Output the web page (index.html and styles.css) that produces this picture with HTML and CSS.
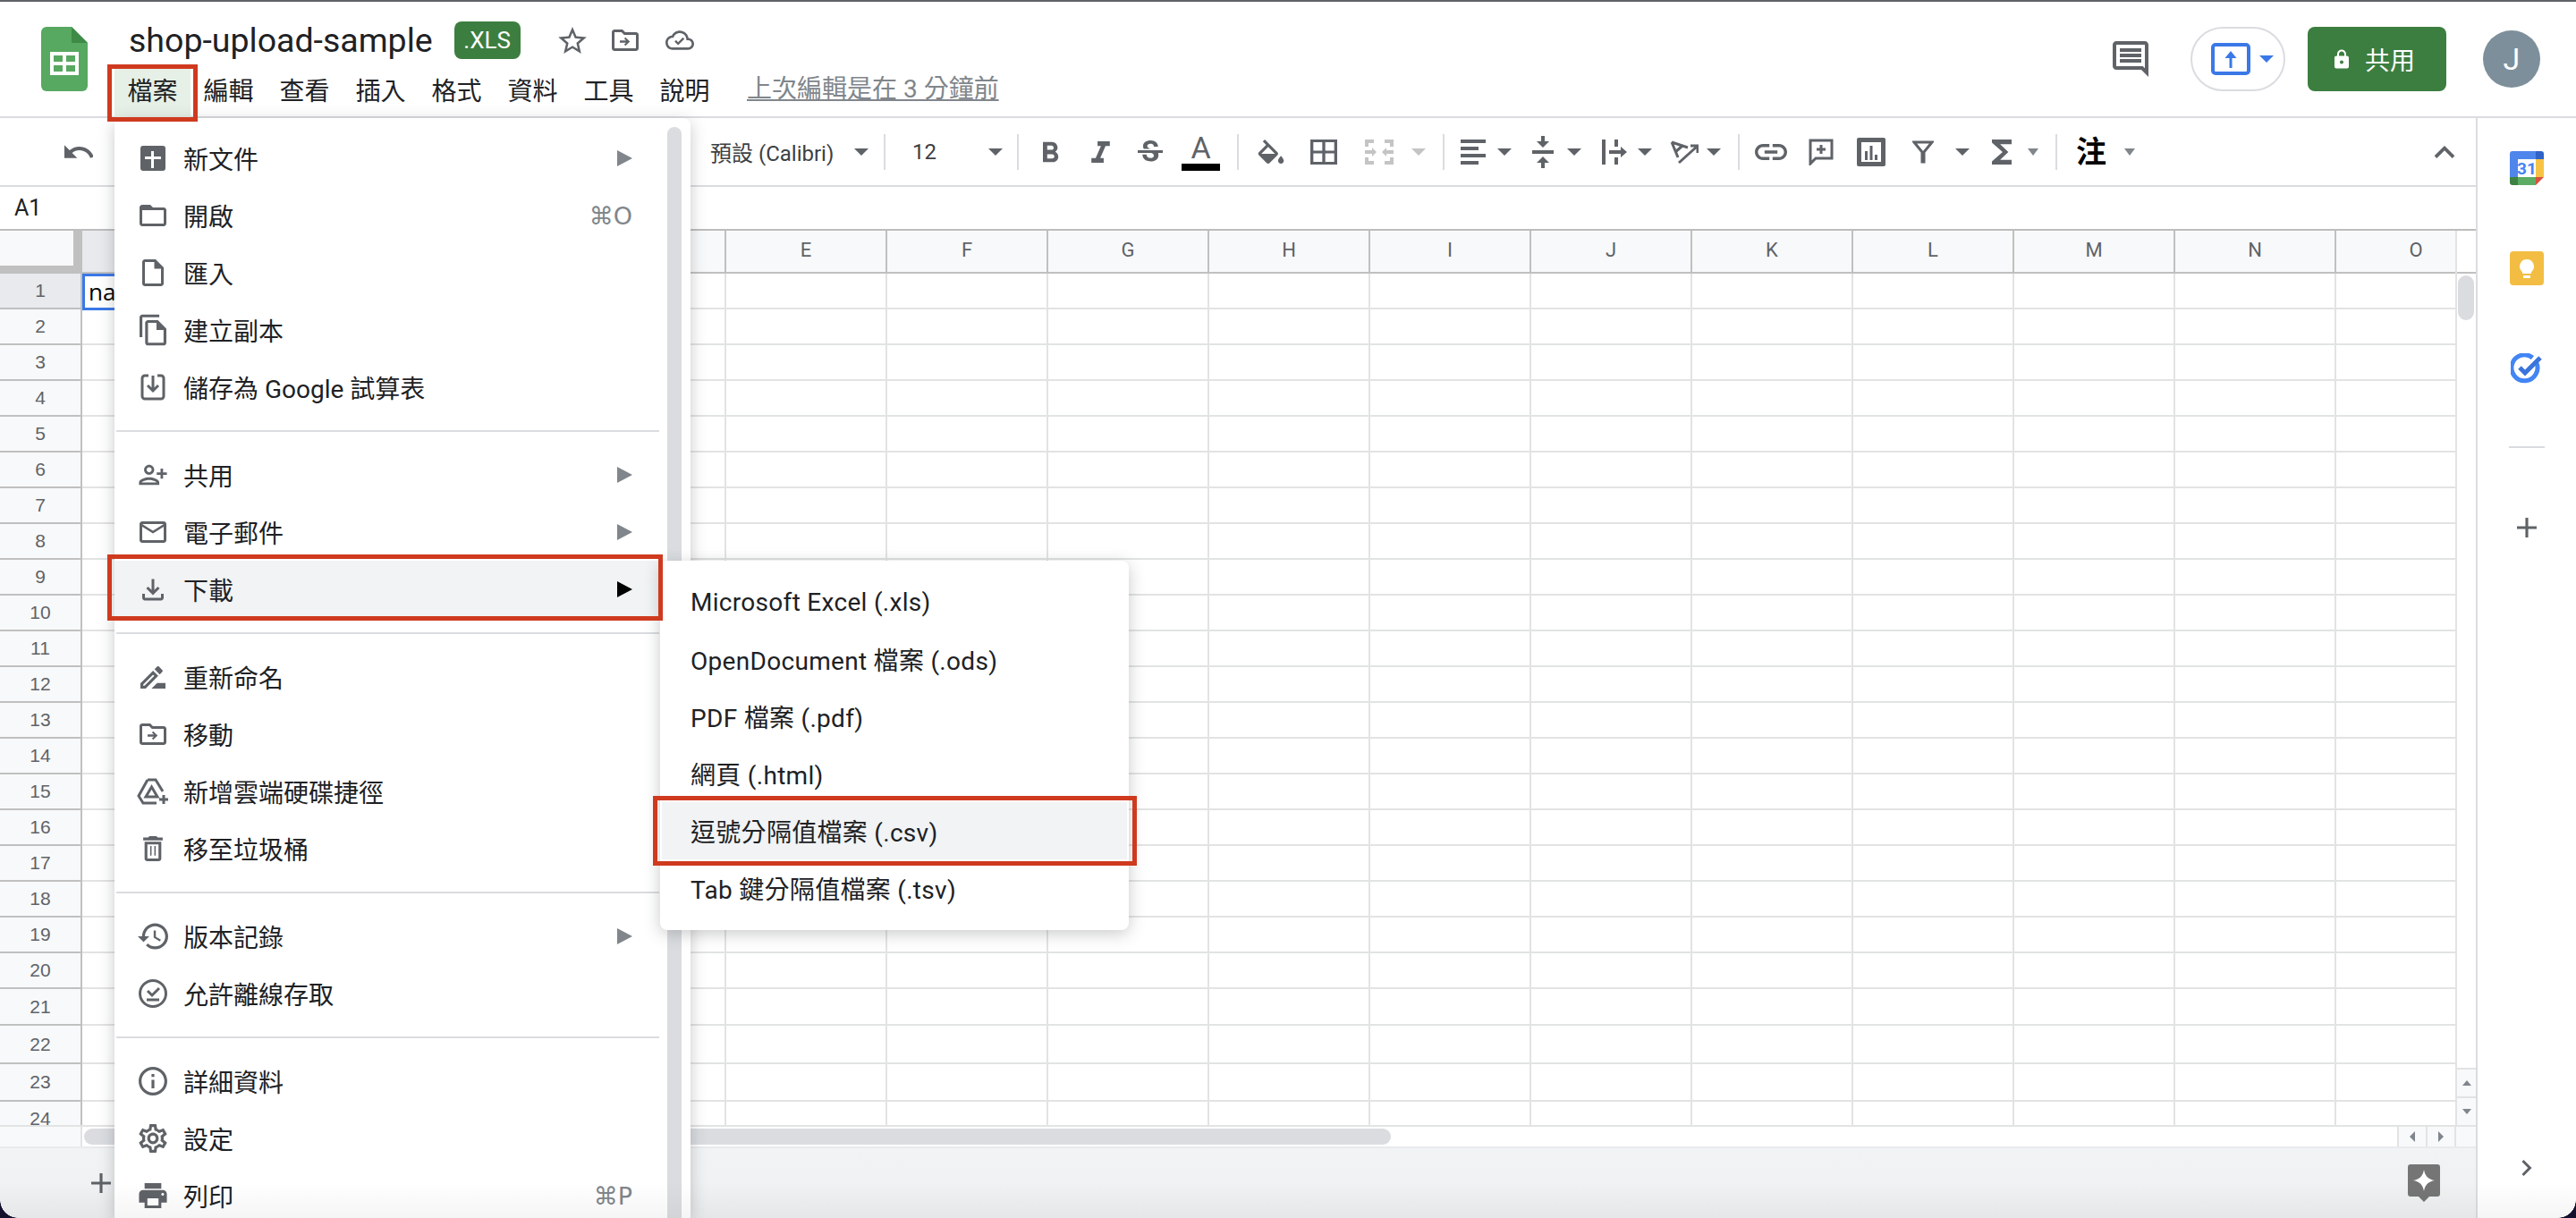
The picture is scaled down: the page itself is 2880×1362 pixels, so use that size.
FILE: index.html
```html
<!DOCTYPE html>
<html lang="zh-Hant">
<head>
    <meta charset="UTF-8">
    <title>shop-upload-sample</title>
    <link rel="stylesheet" href="styles.css">
</head>
<body>
    <div class="top-line"></div>

    <header class="doc-header">
        <svg class="logo" width="52" height="72" viewBox="0 0 52 72">
            <path fill="#57a860" d="M6 0h28l18 18v48a6 6 0 0 1-6 6H6a6 6 0 0 1-6-6V6a6 6 0 0 1 6-6z"/>
            <path fill="#3d8b46" d="M34 0l18 18H34z"/>
            <path fill="#fff" d="M10 28h32v26H10z"/>
            <path fill="#57a860" d="M14 32h10v7H14zM28 32h10v7H28zM14 43h10v7H14zM28 43h10v7H28z"/>
        </svg>
        <div class="doc-info">
            <div class="title-row">
                <span class="doc-title">shop-upload-sample</span>
                <span class="doc-badge">.XLS</span>
                <svg class="title-icon star" width="32" height="30" viewBox="2 2 20 19"><path d="M22 9.24l-7.19-.62L12 2 9.19 8.63 2 9.24l5.46 4.73L5.82 21 12 17.27 18.18 21l-1.63-7.03L22 9.24zM12 15.4l-3.76 2.27 1-4.28-3.32-2.88 4.38-.38L12 6.1l1.71 4.04 4.38.38-3.32 2.88 1 4.28L12 15.4z"/></svg>
                <svg class="title-icon move" width="30" height="24" viewBox="2 4 20 16"><path d="M20 6h-8l-2-2H4c-1.1 0-2 .9-2 2v12c0 1.1.9 2 2 2h16c1.1 0 2-.9 2-2V8c0-1.1-.9-2-2-2zm0 12H4V6h5.17l2 2H20v10z"/><path d="M12.2 9.8l-1 1 1.5 1.4H8v1.6h4.7l-1.5 1.4 1 1 3.3-3.2z"/></svg>
                <svg class="title-icon cloud" width="32" height="24" viewBox="0 4 24 16"><path d="M19.35 10.04C18.67 6.59 15.64 4 12 4 9.11 4 6.6 5.64 5.35 8.04 2.34 8.36 0 10.91 0 14c0 3.31 2.69 6 6 6h13c2.76 0 5-2.24 5-5 0-2.64-2.05-4.78-4.65-4.96zM19 18H6c-2.21 0-4-1.79-4-4s1.79-4 4-4h.71C7.37 7.69 9.48 6 12 6c3.04 0 5.5 2.46 5.5 5.5v.5H19c1.66 0 3 1.34 3 3s-1.34 3-3 3z"/><path d="M10.6 16.2l-3-3 1.3-1.3 1.7 1.7 4-4 1.3 1.3z"/></svg>
            </div>
            <nav class="menu-bar">
                <span class="menu-bar-item active">檔案</span>
                <span class="menu-bar-item">編輯</span>
                <span class="menu-bar-item">查看</span>
                <span class="menu-bar-item">插入</span>
                <span class="menu-bar-item">格式</span>
                <span class="menu-bar-item">資料</span>
                <span class="menu-bar-item">工具</span>
                <span class="menu-bar-item">說明</span>
                <span class="last-edit">上次編輯是在 3 分鐘前</span>
            </nav>
        </div>
        <div class="header-actions">
            <svg class="comments-icon" width="40" height="40" viewBox="2 2 20 20"><path d="M21.99 4c0-1.1-.89-2-1.99-2H4c-1.1 0-2 .9-2 2v12c0 1.1.9 2 2 2h14l4 4-.01-18zM20 4v13.17L18.83 16H4V4h16zM6 12h12v2H6zm0-3h12v2H6zm0-3h12v2H6z"/></svg>
            <div class="present-btn">
                <svg width="44" height="36" viewBox="0 0 44 36"><rect x="2" y="2" width="40" height="32" rx="3" fill="none" stroke="#3b78e7" stroke-width="4"/><path fill="#3b78e7" d="M20.500 28V17h-5l6.500-8 6.500 8h-5v11z"/></svg>
                <span class="caret blue"></span>
            </div>
            <div class="share-btn">
                <svg width="16" height="22" viewBox="4 1 16 21"><path fill="#fff" d="M18 8h-1V6c0-2.760-2.240-5-5-5S7 3.240 7 6v2H6c-1.100 0-2 .9-2 2v10c0 1.100.9 2 2 2h12c1.100 0 2-.9 2-2V10c0-1.100-.9-2-2-2zm-6 9c-1.100 0-2-.9-2-2s.9-2 2-2 2 .9 2 2-.9 2-2 2zM9 8V6c0-1.660 1.340-3 3-3s3 1.340 3 3v2H9z"/></svg>
                <span>共用</span>
            </div>
            <div class="avatar">J</div>
        </div>
    </header>

    <div class="main-row">
        <div class="workspace">
            <div class="toolbar">
                <svg class="tool" width="32" height="15" viewBox="2 7 20 9"><path d="M12.500 8c-2.650 0-5.050.99-6.900 2.600L2 7v9h9l-3.620-3.620c1.390-1.160 3.160-1.880 5.120-1.880 3.540 0 6.550 2.310 7.600 5.500l2.370-.78C21.080 11.030 17.150 8 12.500 8z"/></svg>
                <span></span>
                <span class="tool-text">預設 (Calibri)</span>
                <span class="caret"></span>
                <span class="tool-sep"></span>
                <span class="tool-text">12</span>
                <span class="caret"></span>
                <span class="tool-sep"></span>
                <svg class="tool" width="20" height="24" viewBox="6 3.500 12 15"><path d="M15.600 10.790c.97-.67 1.650-1.770 1.650-2.790 0-2.260-1.750-4-4-4H7v14h7.040c2.090 0 3.710-1.700 3.710-3.790 0-1.520-.86-2.820-2.150-3.420zM10 6.500h3c.83 0 1.500.67 1.500 1.500s-.67 1.500-1.500 1.500h-3v-3zm3.500 9H10v-3h3.500c.83 0 1.500.67 1.500 1.500s-.67 1.500-1.500 1.500z"/></svg>
                <svg class="tool" width="25" height="24" viewBox="6 4 12 14"><path d="M10 4v3h2.210l-3.420 8H6v3h8v-3h-2.210l3.420-8H18V4z"/></svg>
                <svg class="tool" width="28" height="25" viewBox="3 3 18 16"><path d="M6.850 7.080C6.850 4.370 9.450 3 12.240 3c1.640 0 3 .49 3.900 1.280.77.65 1.460 1.730 1.460 3.240h-3.010c0-.31-.05-.59-.15-.85-.29-.86-1.200-1.280-2.250-1.280-1.860 0-2.340 1.020-2.340 1.700 0 .48.25.88.74 1.210.38.25.77.48 1.410.7H7.390c-.21-.34-.54-.89-.54-1.920zM21 12v-2H3v2h9.620c1.150.45 1.960.75 1.960 1.970 0 1-.81 1.670-2.280 1.670-1.540 0-2.930-.54-2.930-2.510H6.400c0 .55.08 1.130.24 1.580.81 2.290 3.220 3.300 5.670 3.300 2.350 0 5.590-.92 5.590-4.310 0-.5-.03-1.190-.2-1.700H21z"/></svg>
                <span class="text-color">A</span>
                <span class="tool-sep"></span>
                <svg class="tool" width="30" height="27" viewBox="3 0 18 17"><path d="M16.560 8.940L7.620 0 6.210 1.410l2.380 2.380-5.150 5.150c-.59.59-.59 1.540 0 2.120l5.500 5.500c.29.29.68.44 1.060.44s.77-.15 1.060-.44l5.500-5.500c.59-.58.59-1.530 0-2.120zM5.210 10L10 5.210 14.790 10H5.210zM19 11.500s-2 2.170-2 3.500c0 1.100.9 2 2 2s2-.9 2-2c0-1.330-2-3.500-2-3.500z"/></svg>
                <svg class="tool" width="30" height="28" viewBox="3 3 18 18" preserveAspectRatio="none"><path d="M3 3v18h18V3H3zm8 16H5v-6h6v6zm0-8H5V5h6v6zm8 8h-6v-6h6v6zm0-8h-6V5h6v6z"/></svg>
                <svg class="tool disabled" width="32" height="28" viewBox="0 0 32 28"><path d="M0 0h10v4H4v4H0zM22 0h10v8h-4V4h-6zM0 20h4v4h6v4H0zM28 20h4v8H22v-4h6zM0 12h8V9l5 5-5 5v-3H0zM32 12h-8V9l-5 5 5 5v-3h8z"/></svg>
                <span class="caret disabled"></span>
                <span class="tool-sep"></span>
                <svg class="tool" width="28" height="28" viewBox="0 0 28 28"><path d="M0 0h28v4H0zM0 8h20v4H0zM0 16h28v4H0zM0 24h20v4H0z"/></svg>
                <span class="caret"></span>
                <svg class="tool" width="24" height="36" viewBox="0 0 24 36"><path d="M0 16h24v4H0zM10 0h4v6h5l-7 7-7-7h5zM10 36v-6H5l7-7 7 7h-5v6z"/></svg>
                <span class="caret"></span>
                <svg class="tool" width="28" height="28" viewBox="0 0 28 28"><path d="M0 0h4v28H0zM14 0h4v8h-4zM14 20h4v8h-4zM8 12h13V8l7 6-7 6v-4H8z"/></svg>
                <span class="caret"></span>
                <svg class="tool line" width="32" height="28" viewBox="0 0 32 28"><path d="M2 3l7 17M2 3l18 6M6 14l8-7M10 26L30 8M23 7h8v8"/></svg>
                <span class="caret"></span>
                <span class="tool-sep"></span>
                <svg class="tool" width="36" height="18" viewBox="2 7 20 10"><path d="M3.900 12c0-1.710 1.390-3.100 3.100-3.100h4V7H7c-2.760 0-5 2.240-5 5s2.240 5 5 5h4v-1.900H7c-1.710 0-3.100-1.390-3.100-3.100zM8 13h8v-2H8v2zm9-6h-4v1.900h4c1.710 0 3.100 1.390 3.100 3.100s-1.390 3.100-3.100 3.100h-4V17h4c2.760 0 5-2.240 5-5s-2.240-5-5-5z"/></svg>
                <svg class="tool line" width="28" height="30" viewBox="0 0 28 30"><path d="M2 2h24v20H8l-6 6zM14 7v10M9 12h10"/></svg>
                <svg class="tool" width="32" height="32" viewBox="0 0 32 32"><path fill-rule="evenodd" d="M0 2a2 2 0 0 1 2-2h28a2 2 0 0 1 2 2v28a2 2 0 0 1-2 2H2a2 2 0 0 1-2-2zM5 5v22h22V5z"/><path d="M9 15h3v10H9zM14.500 9h3v16h-3zM20 19h3v6h-3z"/></svg>
                <svg class="tool line" width="24" height="26" viewBox="0 0 24 26"><path d="M2 2h20L13 13v11h-2V13z"/></svg>
                <span class="caret"></span>
                <svg class="tool" width="22" height="28" viewBox="6 4 12 16" preserveAspectRatio="none"><path d="M18 4H6v2l6.500 6L6 18v2h12v-3h-7l5-5-5-5h7z"/></svg>
                <span class="caret small"></span>
                <span class="tool-sep"></span>
                <span class="tool-note">注</span>
                <span class="caret small"></span>
                <svg class="tool" width="24" height="14" viewBox="6 8 12 7.410"><path d="M12 8l-6 6 1.410 1.410L12 10.830l4.590 4.580L18 14z"/></svg>
            </div>

            <div class="formula-bar">A1</div>

            <div class="sheet">
                <div class="sheet-grid">
                    <div class="col-headers">
                        <div class="corner"></div>
                        <div class="col-head selected">A</div>
                        <div class="col-head">B</div>
                        <div class="col-head">C</div>
                        <div class="col-head">D</div>
                        <div class="col-head">E</div>
                        <div class="col-head">F</div>
                        <div class="col-head">G</div>
                        <div class="col-head">H</div>
                        <div class="col-head">I</div>
                        <div class="col-head">J</div>
                        <div class="col-head">K</div>
                        <div class="col-head">L</div>
                        <div class="col-head">M</div>
                        <div class="col-head">N</div>
                        <div class="col-head">O</div>
                    </div>
                    <div class="row"><div class="row-head selected">1</div><div class="cells"><div class="active-cell">name</div></div></div>
                    <div class="row"><div class="row-head">2</div><div class="cells"></div></div>
                    <div class="row"><div class="row-head">3</div><div class="cells"></div></div>
                    <div class="row"><div class="row-head">4</div><div class="cells"></div></div>
                    <div class="row"><div class="row-head">5</div><div class="cells"></div></div>
                    <div class="row"><div class="row-head">6</div><div class="cells"></div></div>
                    <div class="row"><div class="row-head">7</div><div class="cells"></div></div>
                    <div class="row"><div class="row-head">8</div><div class="cells"></div></div>
                    <div class="row"><div class="row-head">9</div><div class="cells"></div></div>
                    <div class="row"><div class="row-head">10</div><div class="cells"></div></div>
                    <div class="row"><div class="row-head">11</div><div class="cells"></div></div>
                    <div class="row"><div class="row-head">12</div><div class="cells"></div></div>
                    <div class="row"><div class="row-head">13</div><div class="cells"></div></div>
                    <div class="row"><div class="row-head">14</div><div class="cells"></div></div>
                    <div class="row"><div class="row-head">15</div><div class="cells"></div></div>
                    <div class="row"><div class="row-head">16</div><div class="cells"></div></div>
                    <div class="row"><div class="row-head">17</div><div class="cells"></div></div>
                    <div class="row"><div class="row-head">18</div><div class="cells"></div></div>
                    <div class="row"><div class="row-head">19</div><div class="cells"></div></div>
                    <div class="row"><div class="row-head">20</div><div class="cells"></div></div>
                    <div class="row"><div class="row-head">21</div><div class="cells"></div></div>
                    <div class="row tall-22"><div class="row-head">22</div><div class="cells"></div></div>
                    <div class="row tall-23"><div class="row-head">23</div><div class="cells"></div></div>
                    <div class="row"><div class="row-head">24</div><div class="cells"></div></div>
                </div>
                <div class="vscroll">
                    <div class="vscroll-head"></div>
                    <div class="vscroll-thumb"></div>
                    <div class="vscroll-track"></div>
                    <div class="scroll-btn"><span class="arrow up"></span></div>
                    <div class="scroll-btn"><span class="arrow down"></span></div>
                </div>
            </div>

            <div class="hscroll">
                <div class="hscroll-head"></div>
                <div class="hscroll-track"><div class="hscroll-thumb"></div></div>
                <div class="hscroll-btn"><span class="arrow left"></span></div>
                <div class="hscroll-btn"><span class="arrow right"></span></div>
                <div class="hscroll-end"></div>
            </div>

            <div class="sheet-bar">
                <svg class="tool" width="22" height="22" viewBox="5 5 14 14"><path d="M19 13h-6v6h-2v-6H5v-2h6V5h2v6h6v2z"/></svg>
                <svg width="36" height="42" viewBox="0 0 36 42"><path fill="#757575" d="M3 0h30a3 3 0 0 1 3 3v30a3 3 0 0 1-3 3H24l-6 6-6-6H3a3 3 0 0 1-3-3V3a3 3 0 0 1 3-3z"/><path fill="#fff" d="M18 6c1.200 7 4.800 10.800 12 12-7.200 1.200-10.800 5-12 12-1.200-7-4.800-10.800-12-12 7.200-1.200 10.800-5 12-12z"/></svg>
            </div>
        </div>

        <aside class="side-panel">
            <svg class="side-calendar" width="38" height="38" viewBox="0 0 38 38">
                <path fill="#4f86ec" d="M3 0h26v9H9v20H0V3a3 3 0 0 1 3-3z"/>
                <path fill="#2f63c8" d="M29 0h6a3 3 0 0 1 3 3v6h-9z"/>
                <path fill="#f6c344" d="M29 9h9v20h-9z"/>
                <path fill="#5cac64" d="M9 29h20v9H9z"/>
                <path fill="#3d8243" d="M0 29h9v9H3a3 3 0 0 1-3-3z"/>
                <path fill="#d9503f" d="M29 29h9l-9 9z"/>
                <text x="19" y="26" text-anchor="middle" class="cal-num">31</text>
            </svg>
            <svg class="side-keep" width="38" height="38" viewBox="0 0 38 38">
                <rect width="38" height="38" rx="4" fill="#f2bd42"/>
                <path fill="#fff" d="M19 9a8 8 0 0 0-5 14.200V25h10v-1.800A8 8 0 0 0 19 9zM15 27h8v3h-8z"/>
            </svg>
            <svg class="side-tasks" width="36" height="34" viewBox="0 0 36 34">
                <path fill="none" stroke="#4285f4" stroke-width="5" d="M28.500 10a14.500 14.500 0 1 1-4-5"/>
                <path fill="none" stroke="#3a74dc" stroke-width="5" d="M10 16l6 6L33 5"/>
            </svg>
            <div class="side-line"></div>
            <svg class="tool side-plus" width="22" height="22" viewBox="5 5 14 14"><path d="M19 13h-6v6h-2v-6H5v-2h6V5h2v6h6v2z"/></svg>
            <svg class="tool side-chevron" width="12" height="18" viewBox="8.590 6 7.410 12"><path d="M10 6L8.590 7.410 13.170 12l-4.580 4.590L10 18l6-6z"/></svg>
        </aside>
    </div>

    <div class="file-menu">
        <div class="file-list">
            <div class="menu-item"><span class="menu-icon"><svg width="28" height="28" viewBox="0 0 28 28"><path d="M3 0h22a3 3 0 0 1 3 3v22a3 3 0 0 1-3 3H3a3 3 0 0 1-3-3V3a3 3 0 0 1 3-3zm9 6v6H5v3h7v10h3V15h8v-3h-8V6z"/></svg></span><span>新文件</span><span class="menu-arrow"></span></div>
            <div class="menu-item"><span class="menu-icon"><svg width="32" height="24" viewBox="2 4 20 16"><path d="M20 6h-8l-2-2H4c-1.100 0-1.990.9-1.990 2L2 18c0 1.100.9 2 2 2h16c1.100 0 2-.9 2-2V8c0-1.100-.9-2-2-2zm0 12H4V8h16v10z"/></svg></span><span>開啟</span><span class="shortcut">⌘O</span></div>
            <div class="menu-item"><span class="menu-icon"><svg width="24" height="32" viewBox="4 2 16 20"><path d="M14 2H6c-1.100 0-1.990.9-1.990 2L4 20c0 1.100.89 2 1.990 2H18c1.100 0 2-.9 2-2V8l-6-6zM6 20V4h7v5h5v11H6z"/></svg></span><span>匯入</span></div>
            <div class="menu-item"><span class="menu-icon"><svg width="30" height="36" viewBox="2 1 19 22"><path d="M16 1H4c-1.100 0-2 .9-2 2v14h2V3h12V1zm-1 4H8c-1.100 0-2 .9-2 2v14c0 1.100.9 2 2 2h11c1.100 0 2-.9 2-2V11l-6-6zM8 21V7h6v5h5v9H8z"/></svg></span><span>建立副本</span></div>
            <div class="menu-item"><span class="menu-icon"><svg class="line" width="28" height="30" viewBox="0 0 28 30"><path d="M9 2H5a3 3 0 0 0-3 3v20a3 3 0 0 0 3 3h18a3 3 0 0 0 3-3V5a3 3 0 0 0-3-3h-4M14 2v16M8 13l6 6 6-6"/></svg></span><span>儲存為 Google 試算表</span></div>
            <div class="menu-sep"></div>
            <div class="menu-item"><span class="menu-icon"><svg width="34" height="24" viewBox="0 4 24 16"><g transform="translate(24 0) scale(-1 1)"><path d="M15 12c2.210 0 4-1.790 4-4s-1.790-4-4-4-4 1.790-4 4 1.790 4 4 4zm0-6c1.100 0 2 .9 2 2s-.9 2-2 2-2-.9-2-2 .9-2 2-2zm0 8c-2.670 0-8 1.340-8 4v2h16v-2c0-2.660-5.330-4-8-4zm-6 4c.22-.72 3.310-2 6-2 2.700 0 5.800 1.290 6 2H9zM6 15v-3h3v-2H6V7H4v3H1v2h3v3z"/></g></svg></span><span>共用</span><span class="menu-arrow"></span></div>
            <div class="menu-item"><span class="menu-icon"><svg width="32" height="24" viewBox="2 4 20 16"><path d="M22 6c0-1.100-.9-2-2-2H4c-1.100 0-2 .9-2 2v12c0 1.100.9 2 2 2h16c1.100 0 2-.9 2-2V6zm-2 0l-8 5-8-5h16zm0 12H4V8l8 5 8-5v10z"/></svg></span><span>電子郵件</span><span class="menu-arrow"></span></div>
            <div class="menu-item hover"><span class="menu-icon"><svg width="24" height="25" viewBox="4 4 16 16"><path d="M18 15v3H6v-3H4v3c0 1.100.9 2 2 2h12c1.100 0 2-.9 2-2v-3h-2zm-1-4l-1.410-1.410L13 12.170V4h-2v8.170L8.410 9.590 7 11l5 5 5-5z"/></svg></span><span>下載</span><span class="menu-arrow"></span></div>
            <div class="menu-sep"></div>
            <div class="menu-item"><span class="menu-icon"><svg width="28" height="25" viewBox="3 4 18 16"><path d="M15 16l-4 4h10v-4h-6zM12.060 7.190L3 16.250V20h3.750l9.060-9.060-3.750-3.750zM5.920 18H5v-.92l7.060-7.060.92.92L5.920 18zM18.710 8.040c.39-.39.39-1.020 0-1.410l-2.340-2.340c-.39-.39-1.020-.39-1.410 0l-1.830 1.830 3.750 3.750 1.830-1.830z"/></svg></span><span>重新命名</span></div>
            <div class="menu-item"><span class="menu-icon"><svg width="30" height="24" viewBox="2 4 20 16"><path d="M20 6h-8l-2-2H4c-1.100 0-2 .9-2 2v12c0 1.100.9 2 2 2h16c1.100 0 2-.9 2-2V8c0-1.100-.9-2-2-2zm0 12H4V6h5.170l2 2H20v10z"/><path d="M12.200 9.800l-1 1 1.500 1.400H8v1.600h4.700l-1.500 1.400 1 1 3.300-3.200z"/></svg></span><span>移動</span></div>
            <div class="menu-item"><span class="menu-icon"><svg class="line" width="36" height="30" viewBox="0 0 36 30"><path d="M12 2h9l8 13M12 2L2 20l5 8h15M10 21h13l-6.500-11zM30 19v10M25 24h10"/></svg></span><span>新增雲端硬碟捷徑</span></div>
            <div class="menu-item"><span class="menu-icon"><svg width="24" height="28" viewBox="5 3 14 18"><path d="M16 9v10H8V9h8m-1.500-6h-5l-1 1H5v2h14V4h-3.500l-1-1zM18 7H6v12c0 1.100.9 2 2 2h8c1.100 0 2-.9 2-2V7z"/><path d="M10 10h1v7h-1zM13 10h1v7h-1z"/></svg></span><span>移至垃圾桶</span></div>
            <div class="menu-sep"></div>
            <div class="menu-item"><span class="menu-icon"><svg width="34" height="30" viewBox="1 3 21 18"><path d="M13 3c-4.970 0-9 4.030-9 9H1l3.890 3.890.07.14L9 12H6c0-3.870 3.130-7 7-7s7 3.130 7 7-3.130 7-7 7c-1.930 0-3.680-.79-4.940-2.060l-1.420 1.420C8.270 19.990 10.510 21 13 21c4.970 0 9-4.030 9-9s-4.030-9-9-9zm-1 5v5l4.280 2.540.72-1.210-3.500-2.080V8H12z"/></svg></span><span>版本記錄</span><span class="menu-arrow"></span></div>
            <div class="menu-item"><span class="menu-icon"><svg class="line" width="32" height="32" viewBox="0 0 32 32"><circle cx="16" cy="16" r="14.500"/><path d="M10 13l5 5 8-8M9 23h14"/></svg></span><span>允許離線存取</span></div>
            <div class="menu-sep"></div>
            <div class="menu-item"><span class="menu-icon"><svg width="32" height="32" viewBox="2 2 20 20"><path d="M11 7h2v2h-2zm0 4h2v6h-2zm1-9C6.480 2 2 6.480 2 12s4.480 10 10 10 10-4.480 10-10S17.520 2 12 2zm0 18c-4.410 0-8-3.590-8-8s3.590-8 8-8 8 3.590 8 8-3.590 8-8 8z"/></svg></span><span>詳細資料</span></div>
            <div class="menu-item"><span class="menu-icon"><svg width="32" height="32" viewBox="2 2 20 20"><path d="M19.430 12.980c.04-.32.07-.64.07-.98 0-.34-.03-.66-.07-.98l2.110-1.650c.19-.15.24-.42.12-.64l-2-3.460c-.09-.16-.26-.25-.44-.25-.06 0-.12.01-.17.03l-2.490 1c-.52-.4-1.080-.73-1.690-.98l-.38-2.650C14.460 2.180 14.250 2 14 2h-4c-.25 0-.46.18-.49.42l-.38 2.650c-.61.25-1.170.59-1.690.98l-2.490-1c-.06-.02-.12-.03-.18-.03-.17 0-.34.09-.43.25l-2 3.460c-.13.22-.07.49.12.64l2.110 1.650c-.04.32-.07.65-.07.98 0 .33.03.66.07.98l-2.110 1.650c-.19.15-.24.42-.12.64l2 3.460c.09.16.26.25.44.25.06 0 .12-.01.17-.03l2.490-1c.52.4 1.080.73 1.690.98l.38 2.650c.03.24.24.42.49.42h4c.25 0 .46-.18.49-.42l.38-2.650c.61-.25 1.170-.59 1.690-.98l2.490 1c.06.02.12.03.18.03.17 0 .34-.09.43-.25l2-3.460c.12-.22.07-.49-.12-.64l-2.110-1.650zm-1.980-1.710c.04.31.05.52.05.73 0 .21-.02.43-.05.73l-.14 1.130.89.7 1.080.84-.7 1.210-1.270-.51-1.040-.42-.9.68c-.43.32-.84.56-1.250.73l-1.060.43-.16 1.130-.2 1.350h-1.400l-.19-1.350-.16-1.130-1.060-.43c-.43-.18-.83-.41-1.230-.71l-.91-.7-1.060.43-1.270.51-.7-1.210 1.080-.84.89-.7-.14-1.130c-.03-.31-.05-.54-.05-.74s.02-.43.05-.73l.14-1.130-.89-.7-1.080-.84.7-1.210 1.270.51 1.040.42.9-.68c.43-.32.84-.56 1.250-.73l1.060-.43.16-1.130.2-1.350h1.390l.19 1.350.16 1.130 1.060.43c.43.18.83.41 1.230.71l.91.7 1.060-.43 1.270-.51.7 1.210-1.070.85-.89.7.14 1.130zM12 8c-2.210 0-4 1.790-4 4s1.790 4 4 4 4-1.790 4-4-1.790-4-4-4zm0 6c-1.100 0-2-.9-2-2s.9-2 2-2 2 .9 2 2-.9 2-2 2z"/></svg></span><span>設定</span></div>
            <div class="menu-item"><span class="menu-icon"><svg width="32" height="28" viewBox="2 3 20 18"><path d="M19 8H5c-1.660 0-3 1.340-3 3v6h4v4h12v-4h4v-6c0-1.660-1.340-3-3-3zm-3 11H8v-5h8v5zm3-7c-.55 0-1-.45-1-1s.45-1 1-1 1 .45 1 1-.45 1-1 1zm-1-9H6v4h12V3z"/></svg></span><span>列印</span><span class="shortcut">⌘P</span></div>
        </div>
        <div class="menu-scroll"></div>
    </div>

    <div class="sub-menu">
        <div class="sub-item">Microsoft Excel (.xls)</div>
        <div class="sub-item">OpenDocument 檔案 (.ods)</div>
        <div class="sub-item">PDF 檔案 (.pdf)</div>
        <div class="sub-item">網頁 (.html)</div>
        <div class="sub-item hover">逗號分隔值檔案 (.csv)</div>
        <div class="sub-item">Tab 鍵分隔值檔案 (.tsv)</div>
    </div>

    <!-- red boxes drawn on top of the screenshot -->
    <div class="callout callout-file"></div>
    <div class="callout callout-download"></div>
    <div class="callout callout-csv"></div>

    <div class="window-fade"></div>
    <div class="window-corner left"></div>
    <div class="window-corner right"></div>
</body>
</html>
```

FILE: styles.css
```css
* {
    box-sizing: border-box;
}

body {
    position: relative;
    width: 2880px;
    height: 1362px;
    margin: 0;
    overflow: hidden;
    background: #fff;
    color: #202124;
    font-family: Roboto, "Noto Sans CJK TC", sans-serif;
}

svg {
    display: block;
    flex-shrink: 0;
    fill: #5f6368;
}

svg.line {
    fill: none;
    stroke: #5f6368;
    stroke-width: 3;
}

.top-line {
    height: 2px;
    background: #5f6368;
}

/* header */
.doc-header {
    display: flex;
    height: 130px;
    padding-left: 46px;
    border-bottom: 2px solid #dadce0;
}

.logo {
    margin-top: 28px;
}

.doc-info {
    margin-left: 46px;
    padding-top: 22px;
}

.title-row {
    display: flex;
    align-items: center;
    height: 42px;
}

.doc-title {
    font-size: 37.500px;
    line-height: 42px;
}

.doc-badge {
    margin-left: 24px;
    width: 74px;
    height: 42px;
    border-radius: 8px;
    background: #3c7e40;
    color: #fff;
    font-size: 26px;
    line-height: 42px;
    text-align: center;
}

.title-icon.star {
    margin-left: 42px;
}

.title-icon.move {
    margin-left: 28px;
}

.title-icon.cloud {
    margin-left: 30px;
}

.menu-bar {
    display: flex;
    align-items: center;
    height: 60px;
    margin: 6px 0 0 -16px;
}

.menu-bar-item {
    width: 85px;
    height: 60px;
    padding-top: 2px;
    font-size: 28px;
    line-height: 58px;
    text-align: center;
}

.menu-bar-item.active {
    background: #e6f0e6;
}

.last-edit {
    margin: 0 0 10px 27px;
    color: #80868b;
    font-size: 28px;
    text-decoration: underline;
    white-space: nowrap;
}

.header-actions {
    display: flex;
    align-items: center;
    height: 72px;
    margin: 28px 40px 0 auto;
}

.present-btn {
    display: flex;
    align-items: center;
    width: 106px;
    height: 72px;
    margin-left: 47px;
    padding-left: 21px;
    border: 2px solid #dadce0;
    border-radius: 36px;
}

.present-btn .caret {
    margin-left: 10px;
}

.share-btn {
    display: flex;
    align-items: center;
    width: 155px;
    height: 72px;
    margin-left: 25px;
    padding-left: 30px;
    border-radius: 8px;
    background: #3c7e40;
    color: #fff;
    font-size: 28px;
}

.share-btn span {
    margin-left: 18px;
}

.avatar {
    width: 64px;
    height: 64px;
    margin-left: 41px;
    border-radius: 50%;
    background: #7d8f9b;
    color: #fff;
    font-size: 34px;
    line-height: 64px;
    text-align: center;
}

/* main area */
.main-row {
    display: flex;
    height: 1230px;
}

.workspace {
    display: flex;
    flex-direction: column;
    width: 2770px;
    border-right: 2px solid #dadce0;
}

.toolbar {
    display: grid;
    grid-template-columns: 722px 161px 33px 32px 85px 32px 27px 54px 54px 49px 62px 23px 59px 61px 52px 35px 20px 41px 39px 39px 39px 40px 36px 41px 35px 19px 60px 54px 62px 48px 41px 40px 31px 23px 54px 346px 24px;
    align-items: center;
    justify-items: start;
    height: 77px;
    padding-left: 72px;
    border-bottom: 2px solid #dadce0;
}

.toolbar > span:nth-child(2) {
    display: none;
}

.tool-text {
    color: #3c4043;
    font-size: 24px;
    white-space: nowrap;
}

.tool-sep {
    width: 2px;
    height: 40px;
    background: #dadce0;
}

.caret {
    width: 0;
    height: 0;
    border-left: 8px solid transparent;
    border-right: 8px solid transparent;
    border-top: 8px solid #5f6368;
}

.caret.blue {
    border-top-color: #3b78e7;
}

.caret.disabled {
    border-top-color: #c4c4c4;
}

.caret.small {
    border-left-width: 6px;
    border-right-width: 6px;
    border-top: 8px solid #80868b;
}

.tool.disabled {
    fill: #c4c4c4;
}

.text-color {
    width: 43px;
    height: 42px;
    border-bottom: 8px solid #000;
    color: #5f6368;
    font-size: 34px;
    line-height: 32px;
    text-align: center;
}

.tool-note {
    margin-top: -4px;
    color: #000;
    font-size: 34px;
    font-weight: 700;
}

.formula-bar {
    height: 49px;
    padding-left: 16px;
    border-bottom: 2px solid #bdbdbd;
    font-size: 25px;
    line-height: 48px;
}

.sheet {
    display: flex;
    height: 1000px;
}

.sheet-grid {
    width: 2745px;
    overflow: hidden;
}

.col-headers {
    display: flex;
    width: 2800px;
    height: 48px;
}

.corner {
    flex: none;
    width: 92px;
    border-right: 10px solid #c0c0c0;
    border-bottom: 9px solid #c0c0c0;
    background: #f8f9fa;
}

.col-head {
    flex: none;
    width: 180px;
    border-right: 2px solid #c0c0c0;
    border-bottom: 2px solid #c0c0c0;
    background: #f8f9fa;
    color: #5f6368;
    font-size: 22px;
    line-height: 44px;
    text-align: center;
}

.col-head.selected {
    background: #e8eaed;
}

.row {
    display: flex;
    width: 2800px;
    height: 40px;
}

/* the last rows are a little taller in the sheet */
.row:nth-child(22) {
    height: 41px;
}

.row.tall-22 {
    height: 43px;
}

.row.tall-23 {
    height: 42px;
}

.row-head {
    flex: none;
    display: flex;
    align-items: center;
    justify-content: center;
    width: 92px;
    border-right: 2px solid #c0c0c0;
    border-bottom: 2px solid #c0c0c0;
    background: #f8f9fa;
    color: #5f6368;
    font-family: "Liberation Sans", sans-serif;
    font-size: 21px;
}

.row-head.selected {
    background: #e8eaed;
}

.cells {
    position: relative;
    flex: 1;
    border-bottom: 2px solid #e2e3e3;
    background: repeating-linear-gradient(to right, transparent 0, transparent 178px, #e2e3e3 178px, #e2e3e3 180px);
}

.active-cell {
    position: absolute;
    left: 0;
    top: 0;
    width: 180px;
    height: 41px;
    padding-left: 4px;
    border: 3px solid #3b78e7;
    background: #fff;
    color: #000;
    font-family: "Open Sans", sans-serif;
    font-size: 26px;
    line-height: 34px;
}

.vscroll {
    display: flex;
    flex-direction: column;
    width: 23px;
    border-left: 2px solid #e2e3e3;
}

.vscroll-head {
    height: 48px;
    border-bottom: 2px solid #c0c0c0;
}

.vscroll-thumb {
    width: 18px;
    height: 50px;
    margin: 2px 0 0 1px;
    border-radius: 9px;
    background: #dadce0;
}

.vscroll-track {
    flex: 1;
}

.scroll-btn {
    display: flex;
    align-items: center;
    justify-content: center;
    height: 32px;
    border-top: 2px solid #e2e3e3;
    background: #f8f9fa;
}

.arrow {
    width: 0;
    height: 0;
    border: 6px solid transparent;
}

.arrow.up {
    border-top: 0;
    border-left-width: 5px;
    border-right-width: 5px;
    border-bottom: 6px solid #80868b;
}

.arrow.down {
    border-bottom: 0;
    border-left-width: 5px;
    border-right-width: 5px;
    border-top: 6px solid #80868b;
}

.arrow.left {
    border-left: 0;
    border-right: 6px solid #80868b;
}

.arrow.right {
    border-right: 0;
    border-left: 6px solid #80868b;
}

.hscroll {
    display: flex;
    height: 24px;
    border-top: 2px solid #e2e3e3;
}

.hscroll-head {
    width: 92px;
    border-right: 2px solid #e2e3e3;
    background: #f8f9fa;
}

.hscroll-track {
    flex: 1;
    padding: 2px 0 0 2px;
}

.hscroll-thumb {
    width: 1461px;
    height: 18px;
    border-radius: 9px;
    background: #dadce0;
}

.hscroll-btn {
    display: flex;
    align-items: center;
    justify-content: center;
    width: 32px;
    border-left: 2px solid #e2e3e3;
    background: #f8f9fa;
}

.hscroll-end {
    width: 24px;
    border-left: 2px solid #e2e3e3;
    background: #f8f9fa;
}

.sheet-bar {
    display: flex;
    flex: 1;
    align-items: center;
    justify-content: space-between;
    padding: 0 40px 0 102px;
    border-top: 2px solid #e8eaed;
    background: linear-gradient(#f1f3f4, #eef0f1);
}

/* right panel */
.side-panel {
    display: flex;
    flex: 1;
    flex-direction: column;
    align-items: center;
    padding: 37px 0 47px;
}

.side-keep {
    margin-top: 74px;
}

.side-tasks {
    margin-top: 76px;
}

.side-line {
    width: 40px;
    height: 2px;
    margin-top: 70px;
    background: #dadce0;
}

.side-plus {
    margin-top: 78px;
}

.side-chevron {
    margin-top: auto;
}

.cal-num {
    fill: #4285f4;
    font-family: Roboto, sans-serif;
    font-size: 19px;
    font-weight: 700;
}

/* file menu */
.file-menu {
    position: absolute;
    left: 128px;
    top: 132px;
    display: flex;
    width: 644px;
    height: 1230px;
    padding-top: 13px;
    overflow: hidden;
    border-radius: 8px 8px 0 0;
    background: #fff;
    box-shadow: 0 4px 18px rgba(60, 64, 67, 0.28);
}

.file-list {
    flex: none;
    width: 609px;
}

.menu-item {
    display: flex;
    align-items: center;
    height: 64px;
    padding: 0 30px 0 27px;
    font-size: 28px;
}

.menu-item.hover,
.sub-item.hover {
    background: #f1f3f4;
}

.menu-icon {
    display: flex;
    justify-content: center;
    width: 32px;
    margin-right: 18px;
}

.menu-arrow {
    width: 0;
    height: 0;
    margin-left: auto;
    border-left: 17px solid #80868b;
    border-top: 9px solid transparent;
    border-bottom: 9px solid transparent;
}

.menu-item.hover .menu-arrow {
    border-left-color: #000;
}

.shortcut {
    margin-left: auto;
    color: #80868b;
    font-family: "DejaVu Sans", sans-serif;
    font-size: 27px;
}

.menu-sep {
    height: 2px;
    margin: 16px 0 16px 2px;
    background: #dadce0;
}

.menu-scroll {
    flex: none;
    width: 16px;
    margin: -3px 0 0 9px;
    border-radius: 8px 8px 0 0;
    background: #dadce0;
}

.sub-menu {
    position: absolute;
    left: 738px;
    top: 627px;
    width: 524px;
    height: 413px;
    padding: 14px 2px;
    border-radius: 8px;
    background: #fff;
    box-shadow: 0 4px 18px rgba(60, 64, 67, 0.28);
}

.sub-item {
    display: flex;
    align-items: center;
    height: 64px;
    padding-left: 32px;
    font-size: 28px;
    letter-spacing: 0.3px;
    white-space: nowrap;
}

.callout {
    position: absolute;
    border: 5px solid #cf3a1f;
}

.callout-file {
    left: 120px;
    top: 72px;
    width: 101px;
    height: 64px;
}

.callout-download {
    left: 120px;
    top: 620px;
    width: 621px;
    height: 74px;
}

.callout-csv {
    left: 730px;
    top: 890px;
    width: 541px;
    height: 78px;
}

.window-fade {
    position: absolute;
    left: 0;
    right: 0;
    bottom: 0;
    height: 40px;
    background: linear-gradient(transparent, rgba(0, 0, 0, 0.04));
}

.window-corner {
    position: absolute;
    bottom: 0;
    width: 20px;
    height: 20px;
}

.window-corner.left {
    left: 0;
    background: radial-gradient(circle at 100% 0, transparent 19.500px, #14102e 20px);
}

.window-corner.right {
    right: 0;
    background: radial-gradient(circle at 0 0, transparent 19.500px, #14102e 20px);
}
```
